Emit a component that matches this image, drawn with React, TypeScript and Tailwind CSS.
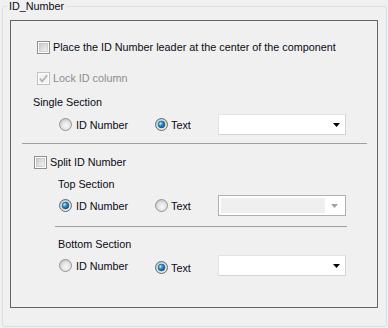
import React from "react";

function Radio({ checked }: { checked?: boolean }) {
  return (
    <svg width="13" height="13" viewBox="0 0 13 13" className="shrink-0">
      <defs>
        <radialGradient id="rOff" cx="0.55" cy="0.6" r="0.65">
          <stop offset="0" stopColor="#fafafa" />
          <stop offset="0.55" stopColor="#e2e2e2" />
          <stop offset="1" stopColor="#bdbdbd" />
        </radialGradient>
        <radialGradient id="rDot" cx="0.35" cy="0.35" r="0.75">
          <stop offset="0" stopColor="#b6ecff" />
          <stop offset="0.45" stopColor="#2a8ccc" />
          <stop offset="1" stopColor="#0d4576" />
        </radialGradient>
      </defs>
      <circle cx="6.5" cy="6.5" r="6" fill="url(#rOff)" stroke={checked ? "#5b6f80" : "#969696"} strokeWidth="1" />
      {checked && <circle cx="6.5" cy="6.5" r="3.4" fill="url(#rDot)" stroke="#1a4f78" strokeWidth="0.6" />}
    </svg>
  );
}

function Checkbox({ disabled, checked }: { disabled?: boolean; checked?: boolean }) {
  return (
    <svg width="13" height="13" viewBox="0 0 13 13" className="shrink-0">
      <defs>
        <linearGradient id="cbIn" x1="0" y1="0" x2="1" y2="1">
          <stop offset="0" stopColor="#c8c8c8" />
          <stop offset="1" stopColor="#f6f6f6" />
        </linearGradient>
      </defs>
      <rect x="0.5" y="0.5" width="12" height="12" fill="#ffffff" stroke={disabled ? "#c2c2c2" : "#8e8f8f"} />
      {disabled ? (
        <rect x="2" y="2" width="9" height="9" fill="#f4f4f4" />
      ) : (
        <rect x="2.5" y="2.5" width="8" height="8" fill="url(#cbIn)" stroke="#b4b4b4" strokeWidth="0.6" />
      )}
      {checked && (
        <path d="M2.8 6.6 L5.2 9.4 L10.2 3.2" fill="none" stroke={disabled ? "#b1b1b1" : "#333"} strokeWidth="1.7" />
      )}
    </svg>
  );
}

function Combo({ disabled }: { disabled?: boolean }) {
  if (disabled) {
    return (
      <div className="w-[128px] h-[21px] bg-white border border-[#b0b0b0] flex p-[2px]">
        <div className="flex-1 bg-[#efefef]" />
        <div className="w-[18px] flex items-center justify-center">
          <svg width="7" height="4" viewBox="0 0 7 4">
            <polygon points="0,0 7,0 3.5,4" fill="#a3a3a3" />
          </svg>
        </div>
      </div>
    );
  }
  return (
    <div className="w-[128px] h-[21px] bg-white border border-[#e3e3e3] border-r-[#d4d4d4] border-b-[#d4d4d4] flex items-center justify-end pr-[5px]">
      <svg width="7" height="4" viewBox="0 0 7 4">
        <polygon points="0,0 7,0 3.5,4" fill="#000" />
      </svg>
    </div>
  );
}

function RadioRow({ idChecked, lowerText }: { idChecked: boolean; lowerText?: boolean }) {
  return (
    <div className="h-[21px] flex items-center pl-[48px]">
      <div className="w-[96px] flex items-center gap-[4px]">
        <Radio checked={idChecked} />
        <span>ID Number</span>
      </div>
      <div className={"w-[63px] flex items-center gap-[3px] " + (lowerText ? "pt-[4px]" : "")}>
        <Radio checked={!idChecked} />
        <span>Text</span>
      </div>
      <Combo disabled={idChecked} />
    </div>
  );
}

export default function App() {
  return (
    <div className="w-[388px] h-[328px] bg-[#f0f0f0] pt-[6px] pl-[2px] font-['Liberation_Sans',Arial,sans-serif] text-[10.8px] leading-[14px] text-[#0a0a14]">
      <div className="relative w-[385px] h-[321px] border border-[#d5dfe6] rounded-[3px] pt-[13px] pl-[7px]">
        <span className="absolute left-[4px] top-[-8px] px-[2px] bg-[#f0f0f0] leading-[14px]">ID_Number</span>
        <div className="w-[368px] h-[288px] border border-[#646464] flex flex-col">
          <div className="mt-[19px] h-[14px] flex items-center gap-[3px] pl-[26px]">
            <Checkbox />
            <span>Place the ID Number leader at the center of the component</span>
          </div>
          <div className="mt-[17px] h-[14px] flex items-center gap-[3px] pl-[26px]">
            <Checkbox disabled checked />
            <span className="text-[#8d8d8d]">Lock ID column</span>
          </div>
          <div className="mt-[10px] h-[14px] flex items-center pl-[22px]">Single Section</div>
          <div className="mt-[5px]">
            <RadioRow idChecked={false} />
          </div>
          <div className="mt-[8px] ml-[11px] w-[345px] h-[1px] bg-[#a0a0a0]" />
          <div className="mt-[11px] h-[14px] flex items-center gap-[3px] pl-[23px]">
            <Checkbox />
            <span>Split ID Number</span>
          </div>
          <div className="mt-[8px] h-[14px] flex items-center pl-[47px]">Top Section</div>
          <div className="mt-[4px]">
            <RadioRow idChecked={true} />
          </div>
          <div className="mt-[10px] ml-[44px] w-[292px] h-[1px] bg-[#a0a0a0]" />
          <div className="mt-[10px] h-[14px] flex items-center pl-[47px]">Bottom Section</div>
          <div className="mt-[4px]">
            <RadioRow idChecked={false} lowerText />
          </div>
        </div>
      </div>
    </div>
  );
}
